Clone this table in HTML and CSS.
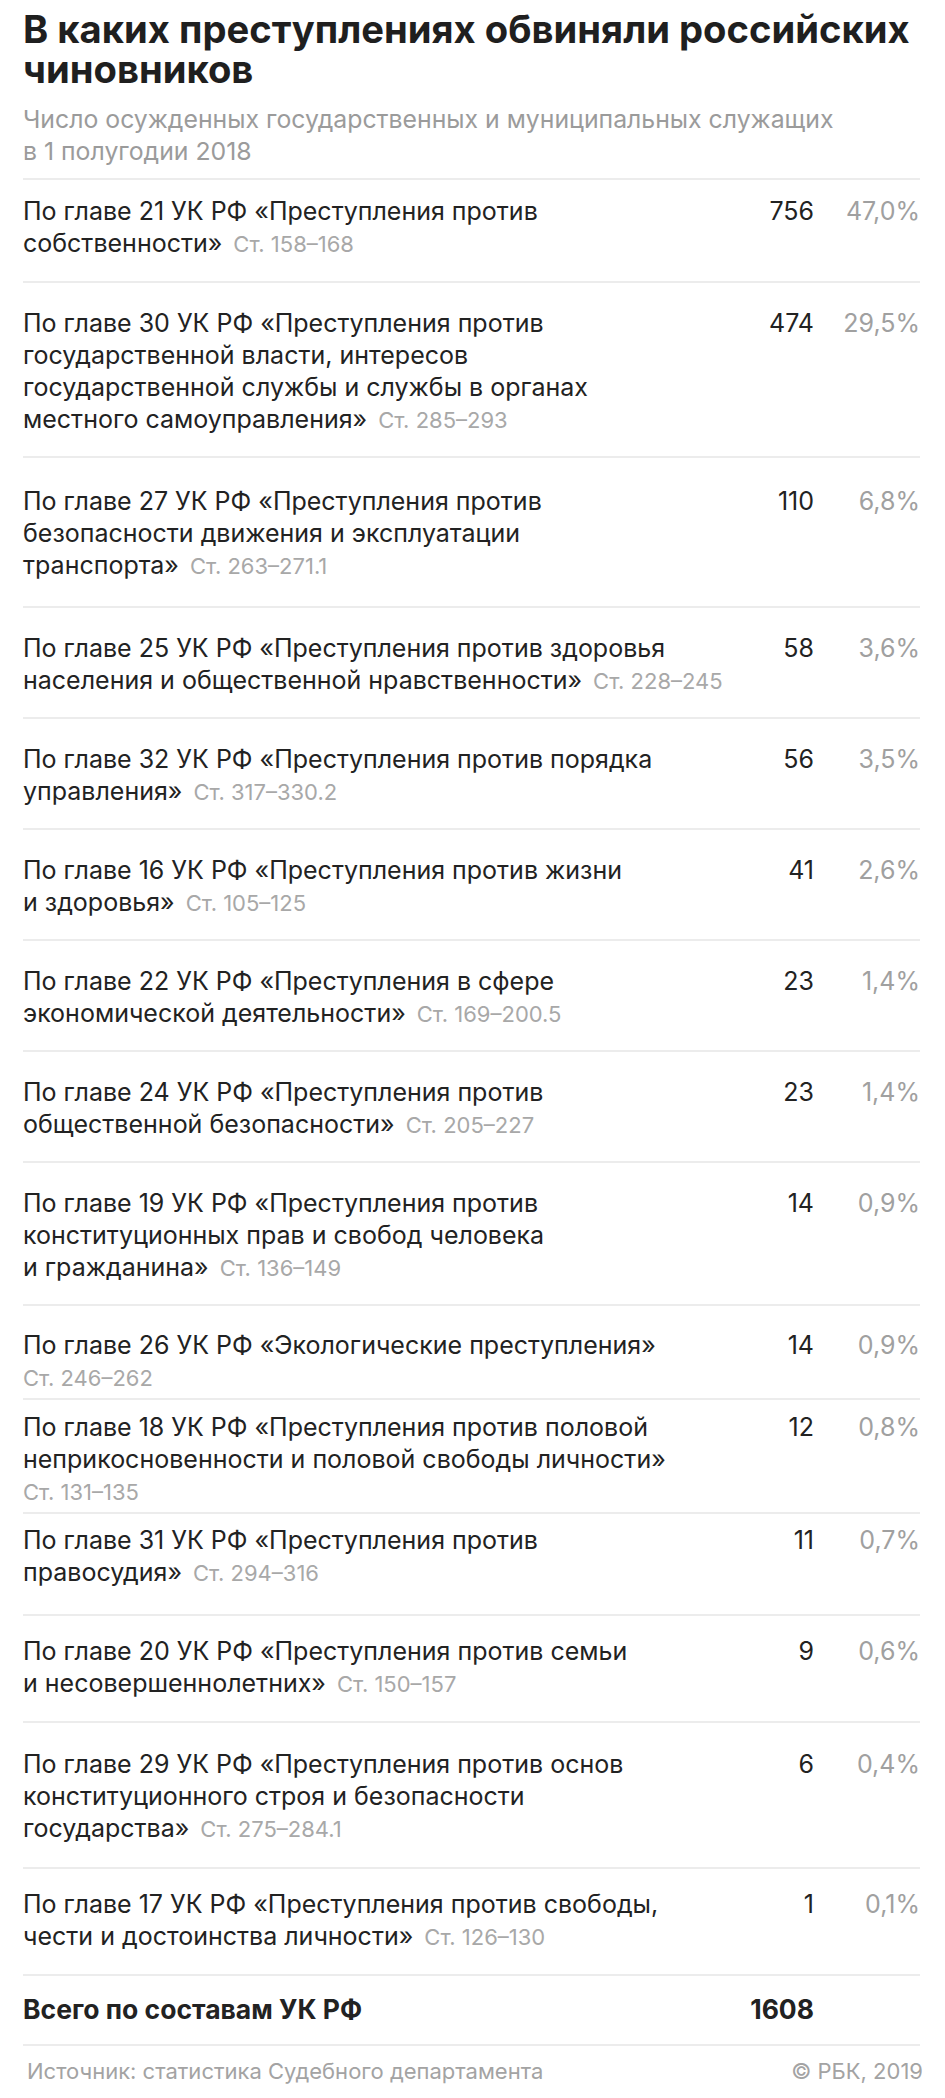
FILE: index.html
```html
<!DOCTYPE html>
<html lang="ru">
<head>
<meta charset="utf-8">
<title>В каких преступлениях обвиняли российских чиновников</title>
<link rel="stylesheet" href="styles.css">
</head>
<body>
<main class="page">
  <header class="head">
    <h1 class="title">В каких преступлениях обвиняли российских чиновников</h1>
    <p class="subtitle">Число осужденных государственных и муниципальных служащих в&nbsp;1&nbsp;полугодии 2018</p>
  </header>

  <section class="table">
    <div class="row row--first">
      <div class="desc">По главе 21 УК РФ «Преступления против<br>собственности» <span class="art">Ст.&nbsp;158–168</span></div>
      <div class="num">756</div><div class="pct">47,0%</div>
    </div>
    <div class="row">
      <div class="desc">По главе 30 УК РФ «Преступления против<br>государственной власти, интересов<br>государственной службы и службы в&nbsp;органах<br>местного самоуправления» <span class="art">Ст.&nbsp;285–293</span></div>
      <div class="num">474</div><div class="pct">29,5%</div>
    </div>
    <div class="row row--loose">
      <div class="desc">По главе 27 УК РФ «Преступления против<br>безопасности движения и&nbsp;эксплуатации<br>транспорта» <span class="art">Ст.&nbsp;263–271.1</span></div>
      <div class="num">110</div><div class="pct">6,8%</div>
    </div>
    <div class="row">
      <div class="desc">По главе 25 УК РФ «Преступления против здоровья<br>населения и&nbsp;общественной нравственности» <span class="art">Ст.&nbsp;228–245</span></div>
      <div class="num">58</div><div class="pct">3,6%</div>
    </div>
    <div class="row">
      <div class="desc">По главе 32 УК РФ «Преступления против порядка<br>управления» <span class="art">Ст.&nbsp;317–330.2</span></div>
      <div class="num">56</div><div class="pct">3,5%</div>
    </div>
    <div class="row">
      <div class="desc">По главе 16 УК РФ «Преступления против жизни<br>и&nbsp;здоровья» <span class="art">Ст.&nbsp;105–125</span></div>
      <div class="num">41</div><div class="pct">2,6%</div>
    </div>
    <div class="row">
      <div class="desc">По главе 22 УК РФ «Преступления в&nbsp;сфере<br>экономической деятельности» <span class="art">Ст.&nbsp;169–200.5</span></div>
      <div class="num">23</div><div class="pct">1,4%</div>
    </div>
    <div class="row">
      <div class="desc">По главе 24 УК РФ «Преступления против<br>общественной безопасности» <span class="art">Ст.&nbsp;205–227</span></div>
      <div class="num">23</div><div class="pct">1,4%</div>
    </div>
    <div class="row">
      <div class="desc">По главе 19 УК РФ «Преступления против<br>конституционных прав и&nbsp;свобод человека<br>и&nbsp;гражданина» <span class="art">Ст.&nbsp;136–149</span></div>
      <div class="num">14</div><div class="pct">0,9%</div>
    </div>
    <div class="row row--snug">
      <div class="desc">По главе 26 УК РФ «Экологические преступления»<br><span class="art art--own">Ст.&nbsp;246–262</span></div>
      <div class="num">14</div><div class="pct">0,9%</div>
    </div>
    <div class="row row--tight">
      <div class="desc">По главе 18 УК РФ «Преступления против половой<br>неприкосновенности и&nbsp;половой свободы личности»<br><span class="art art--own">Ст.&nbsp;131–135</span></div>
      <div class="num">12</div><div class="pct">0,8%</div>
    </div>
    <div class="row row--raised">
      <div class="desc">По главе 31 УК РФ «Преступления против<br>правосудия» <span class="art">Ст.&nbsp;294–316</span></div>
      <div class="num">11</div><div class="pct">0,7%</div>
    </div>
    <div class="row row--short">
      <div class="desc">По главе 20 УК РФ «Преступления против семьи<br>и&nbsp;несовершеннолетних» <span class="art">Ст.&nbsp;150–157</span></div>
      <div class="num">9</div><div class="pct">0,6%</div>
    </div>
    <div class="row row--wide">
      <div class="desc">По главе 29 УК РФ «Преступления против основ<br>конституционного строя и&nbsp;безопасности<br>государства» <span class="art">Ст.&nbsp;275–284.1</span></div>
      <div class="num">6</div><div class="pct">0,4%</div>
    </div>
    <div class="row row--short">
      <div class="desc">По главе 17 УК РФ «Преступления против свободы,<br>чести и&nbsp;достоинства личности» <span class="art">Ст.&nbsp;126–130</span></div>
      <div class="num">1</div><div class="pct">0,1%</div>
    </div>
    <div class="row row--total">
      <div class="desc">Всего по составам УК РФ</div>
      <div class="num">1608</div><div class="pct"></div>
    </div>
  </section>

  <footer class="foot">
    <span class="source">Источник: статистика Судебного департамента</span>
    <span class="copy">© РБК, 2019</span>
  </footer>
</main>
</body>
</html>
```

FILE: styles.css
```css
* { box-sizing: border-box; }

html, body {
  margin: 0;
  padding: 0;
  background: #ffffff;
}

body {
  font-family: "Inter", "Roboto", "Liberation Sans", sans-serif;
  color: #222222;
}

.page {
  width: 945px;
  padding: 9px 25px 0 23px;
}

.title {
  margin: 0;
  font-size: 38.2px;
  line-height: 40px;
  font-weight: 700;
  color: #1f1f1f;
}

.subtitle {
  margin: 14px 0 0;
  font-size: 24.8px;
  line-height: 32px;
  color: #9b9b9b;
  padding-bottom: 11px;
}

.table {
  border-top: 2px solid #ececec;
}

.row {
  display: grid;
  grid-template-columns: 720px 1fr 106px;
  align-items: start;
  padding: 24px 0 21px;
  border-bottom: 2px solid #ececec;
  font-size: 25px;
  line-height: 32px;
}

.row--first { padding: 15px 0 22px; }
.row--loose { padding: 27px 0 25px; }
.row--snug { padding: 23px 0 5px; }
.row--tight { padding: 11px 0 5px; }
.row--raised { padding: 10px 0 26px; }
.row--short { padding: 19px 0 22px; }
.row--wide { padding: 25px 0 23px; }
.row--total { padding: 17px 0 19px; font-weight: 700; font-size: 26.5px; }

.desc { color: #222222; }

.art {
  font-size: 22px;
  line-height: 1;
  color: #a8a8a8;
  margin-left: 4px;
}

.art--own { margin-left: 0; }

.num {
  text-align: right;
  color: #222222;
}

.pct {
  text-align: right;
  color: #a0a0a0;
}

.foot {
  display: flex;
  justify-content: space-between;
  margin: 0 -3px 0 4px;
  padding: 9px 0 10px;
  font-size: 22px;
  line-height: 32px;
  color: #a3a3a3;
}
```
